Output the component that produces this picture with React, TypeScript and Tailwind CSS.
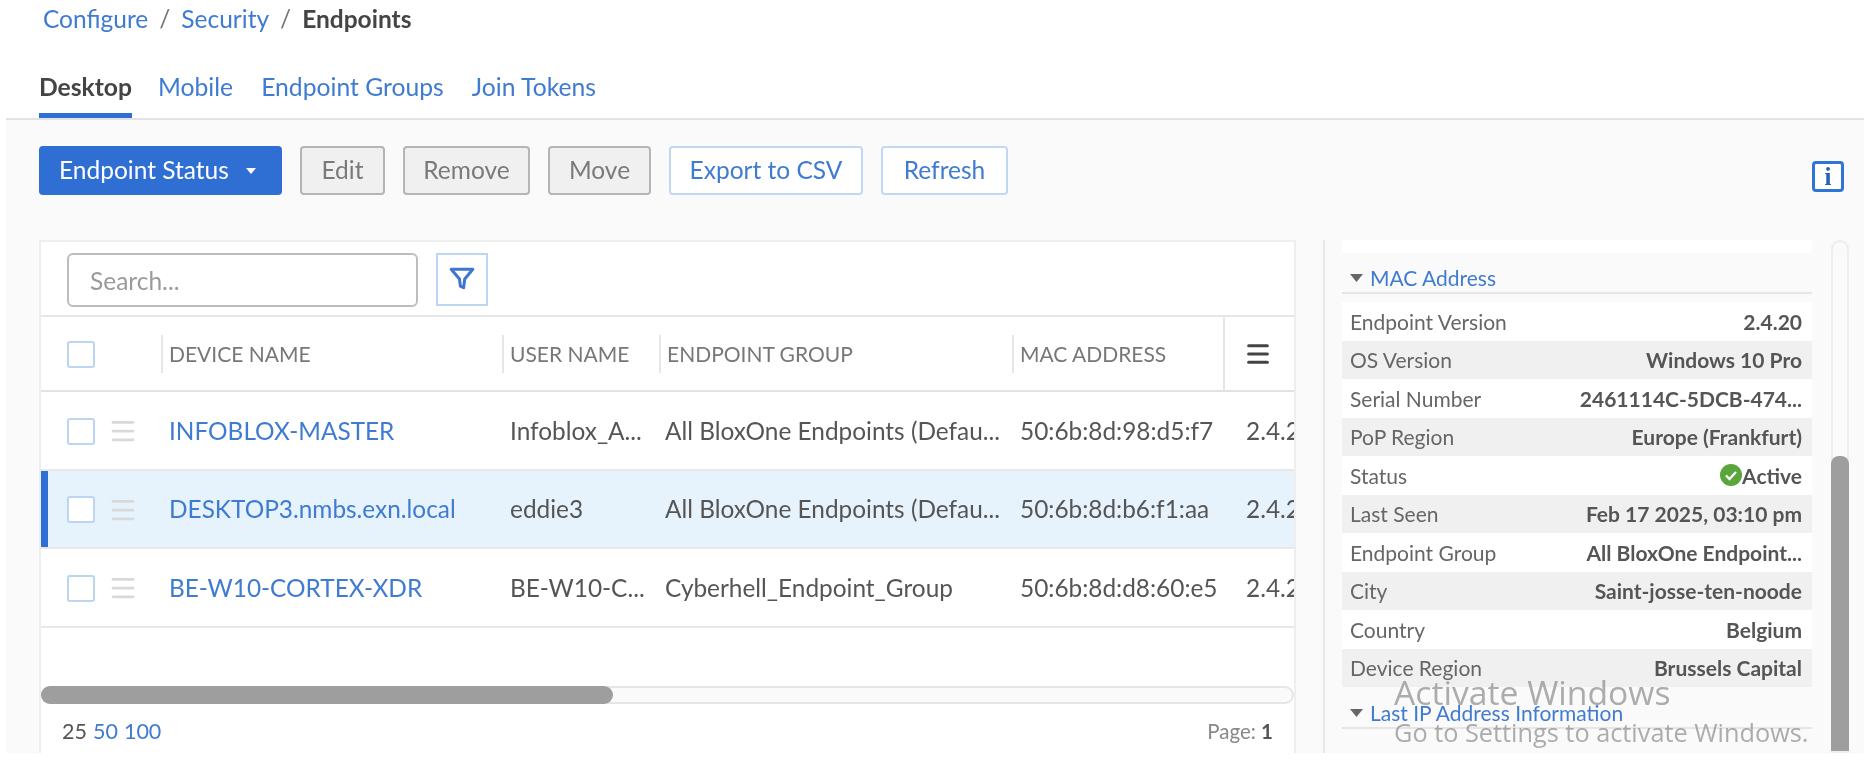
import { Menu } from 'lucide-react';

const tabs = ['Mobile', 'Endpoint Groups', 'Join Tokens'];

const rows = [
  { name: 'INFOBLOX-MASTER', user: 'Infoblox_A...', group: 'All BloxOne Endpoints (Defau...', mac: '50:6b:8d:98:d5:f7', selected: false },
  { name: 'DESKTOP3.nmbs.exn.local', user: 'eddie3', group: 'All BloxOne Endpoints (Defau...', mac: '50:6b:8d:b6:f1:aa', selected: true },
  { name: 'BE-W10-CORTEX-XDR', user: 'BE-W10-C...', group: 'Cyberhell_Endpoint_Group', mac: '50:6b:8d:d8:60:e5', selected: false },
];

const details = [
  ['Endpoint Version', '2.4.20'],
  ['OS Version', 'Windows 10 Pro'],
  ['Serial Number', '2461114C-5DCB-474...'],
  ['PoP Region', 'Europe (Frankfurt)'],
  ['Status', 'Active'],
  ['Last Seen', 'Feb 17 2025, 03:10 pm'],
  ['Endpoint Group', 'All BloxOne Endpoint...'],
  ['City', 'Saint-josse-ten-noode'],
  ['Country', 'Belgium'],
  ['Device Region', 'Brussels Capital'],
];

function Caret({ className }: { className: string }) {
  return (
    <svg viewBox="0 0 10 6" className={className} fill="currentColor">
      <path d="M0 0h10L5 6z" />
    </svg>
  );
}

function Checkbox() {
  return <div className="h-[27px] w-[28px] shrink-0 rounded-[3px] border-2 border-[#bcd5f2] bg-white" />;
}

function DisabledButton({ label, width }: { label: string; width: string }) {
  return (
    <button className={`h-[49px] ${width} rounded-[4px] border-2 border-[#b5b5b5] bg-[#f0f0f0] text-[24.5px] text-[#7a7a7a]`}>
      {label}
    </button>
  );
}

function OutlineButton({ label, width }: { label: string; width: string }) {
  return (
    <button className={`h-[49px] ${width} rounded-[4px] border-2 border-[#c0d8f3] bg-white text-[24.5px] text-[#3f7bd0]`}>
      {label}
    </button>
  );
}

function SectionTitle({ label }: { label: string }) {
  return (
    <div className="flex h-[41px] items-center gap-[7px] border-b-2 border-[#e6e6e6] pl-[8px] pt-[10px] text-[21px] text-[#3f7bd0]">
      <Caret className="h-[8px] w-[13px] text-[#666666]" />
      {label}
    </div>
  );
}

export default function App() {
  return (
    <div className="flex h-[762px] w-[1864px] flex-col overflow-hidden bg-white pb-[9px] pl-[6px] font-['Lato',sans-serif] blur-[0.6px]">
      <div className="flex h-[38px] items-center gap-[11px] pl-[37px] text-[24.5px] text-[#3f7bd0]">
        <span>Configure</span>
        <span className="text-[#777777]">/</span>
        <span>Security</span>
        <span className="text-[#777777]">/</span>
        <span className="font-bold text-[#444444]">Endpoints</span>
      </div>

      <div className="flex h-[82px] items-end gap-[28px] border-b-2 border-[#e2e2e2] pl-[33px] text-[24.7px] text-[#3f7bd0]">
        <div className="-mr-[2px] flex h-[62px] w-[93px] items-center justify-center whitespace-nowrap border-b-[5px] border-[#2f6fd4] pt-[4px] font-bold text-[#444444]">
          Desktop
        </div>
        {tabs.map((tab) => (
          <div key={tab} className="flex h-[62px] items-center pb-[1px]">
            {tab}
          </div>
        ))}
      </div>

      <div className="flex min-h-0 flex-1 flex-col bg-[#fafafa] pl-[33px]">
        <div className="flex h-[120px] shrink-0 items-start pr-[20px] pt-[26px]">
          <div className="flex gap-[18px]">
            <button className="flex h-[49px] w-[243px] items-center gap-[16px] rounded-[4px] bg-[#2f6fd4] pl-[20px] text-[24.5px] text-white">
              Endpoint Status
              <Caret className="h-[6px] w-[12px] text-white" />
            </button>
            <DisabledButton label="Edit" width="w-[85px]" />
            <DisabledButton label="Remove" width="w-[127px]" />
            <DisabledButton label="Move" width="w-[103px]" />
            <OutlineButton label="Export to CSV" width="w-[194px]" />
            <OutlineButton label="Refresh" width="w-[127px]" />
          </div>
          <div className="ml-auto mt-[15px] flex h-[31px] w-[32px] items-center justify-center rounded-[4px] border-[3px] border-[#2f74d8] bg-white font-['Liberation_Serif',serif] text-[25px] font-bold leading-none text-[#2a62b8]">
            i
          </div>
        </div>

        <div className="flex min-h-0 flex-1">
          <div className="flex w-[1257px] shrink-0 flex-col overflow-hidden border-x-2 border-t-2 border-[#eeeeee] bg-white">
            <div className="flex h-[75px] shrink-0 items-start gap-[18px] border-b-2 border-[#e6e6e6] pl-[26px] pt-[11px]">
              <div className="flex h-[54px] w-[351px] items-center rounded-[6px] border-2 border-[#bdbdbd] pl-[21px] pt-[2px] text-[24.5px] text-[#9a9a9a]">
                Search...
              </div>
              <div className="flex h-[53px] w-[52px] items-center justify-center border-2 border-[#bcd5f2] pb-[4px]">
                <svg viewBox="0 0 24 24" className="h-[26px] w-[26px]" fill="none" stroke="#3f76d2" strokeWidth="2.8" strokeLinejoin="round">
                  <path d="M2 4h20l-7.5 9-1 8-3-1.5-.8-6.5z" />
                </svg>
              </div>
            </div>

            <div className="flex h-[75px] shrink-0 items-center border-b-2 border-[#e2e2e2] text-[21px] text-[#777777]">
              <div className="flex w-[120px] shrink-0 pl-[26px] pt-[2px]">
                <Checkbox />
              </div>
              <div className="h-[38px] w-[341px] shrink-0 border-l-2 border-[#e6e6e6] pl-[6px] leading-[38px]">DEVICE NAME</div>
              <div className="h-[38px] w-[157px] shrink-0 border-l-2 border-[#e6e6e6] pl-[6px] leading-[38px]">USER NAME</div>
              <div className="h-[38px] w-[353px] shrink-0 border-l-2 border-[#e6e6e6] pl-[6px] leading-[38px]">ENDPOINT GROUP</div>
              <div className="h-[38px] w-[211px] shrink-0 border-l-2 border-[#e6e6e6] pl-[6px] leading-[38px]">MAC ADDRESS</div>
              <div className="flex h-full flex-1 items-center justify-center border-l-2 border-[#e6e6e6] pr-[3px]">
                <Menu className="h-[28px] w-[28px] text-[#444444]" strokeWidth={2.6} />
              </div>
            </div>

            {rows.map((row) => (
              <div
                key={row.name}
                className={`flex h-[78.5px] shrink-0 items-center border-b-2 border-[#e8e8e8] pt-[2px] text-[24.4px] text-[#555555] ${row.selected ? 'bg-[#e6f2fc]' : 'bg-white'}`}
              >
                <div className={`-mt-[2px] flex w-[120px] shrink-0 items-center gap-[13px] self-stretch pt-[2px] ${row.selected ? 'border-l-[7px] border-[#2f6fd4] pl-[19px]' : 'pl-[26px]'}`}>
                  <Checkbox />
                  <Menu className="h-[30px] w-[30px] text-[#d9d9d9]" strokeWidth={2.2} />
                </div>
                <div className="w-[341px] shrink-0 whitespace-nowrap pl-[8px] text-[#3f7bd0]">{row.name}</div>
                <div className="w-[157px] shrink-0 whitespace-nowrap pl-[8px]">{row.user}</div>
                <div className="w-[353px] shrink-0 whitespace-nowrap pl-[6px]">{row.group}</div>
                <div className="w-[211px] shrink-0 whitespace-nowrap pl-[8px]">{row.mac}</div>
                <div className="flex-1 overflow-hidden whitespace-nowrap pl-[23px]">2.4.20</div>
              </div>
            ))}

            <div className="flex-1" />

            <div className="h-[18px] shrink-0 rounded-full border-2 border-[#e6e6e6] bg-[#fafafa]">
              <div className="-m-[2px] h-[18px] w-[572px] rounded-full bg-[#9e9e9e]" />
            </div>

            <div className="flex h-[49px] shrink-0 items-center justify-between pl-[21px] pr-[21px] pt-[6px] text-[20.5px]">
              <div className="flex gap-[6px] text-[21.5px] text-[#3f7bd0]">
                <span className="text-[#555555]">25</span>
                <span>50</span>
                <span>100</span>
              </div>
              <div className="text-[#888888]">
                Page: <span className="font-bold text-[#555555]">1</span>
              </div>
            </div>
          </div>

          <div className="ml-[27px] flex flex-1 border-l-2 border-[#e6e6e6] pl-[17px]">
            <div className="flex w-[470px] shrink-0 flex-col">
              <div className="h-[13px] bg-white" />
              <SectionTitle label="MAC Address" />
              <div className="mt-[8px] flex flex-col text-[21px] text-[#666666]">
                {details.map(([label, value], i) => (
                  <div key={label} className={`flex h-[38.5px] items-center justify-between pl-[8px] pr-[10px] ${i % 2 === 1 ? 'bg-[#f0f0f0]' : 'bg-white'}`}>
                    <span>{label}</span>
                    <span className="flex items-center font-bold text-[#555555]">
                      {label === 'Status' && (
                        <svg viewBox="0 0 22 22" className="h-[22px] w-[22px]">
                          <circle cx="11" cy="11" r="11" fill="#5aa63c" />
                          <path d="M6 11.5l3.5 3.5L16 8" fill="none" stroke="#ffffff" strokeWidth="2.4" />
                        </svg>
                      )}
                      {value}
                    </span>
                  </div>
                ))}
              </div>
              <div className="mt-[1px]">
                <SectionTitle label="Last IP Address Information" />
              </div>
            </div>
            <div className="ml-[19px] flex w-[18px] shrink-0 flex-col rounded-t-full border-2 border-[#eeeeee]">
              <div className="-mx-[2px] mt-[214px] flex-1 rounded-t-[8px] bg-[#9e9e9e]" />
            </div>
          </div>
        </div>
      </div>

      <div className="pointer-events-none absolute left-[1394px] top-[670px] whitespace-nowrap font-['Open_Sans',sans-serif] text-[#8a8a8a]/70">
        <div className="text-[33.7px] leading-[44px]">Activate Windows</div>
        <div className="text-[25.3px] leading-[36px]">Go to Settings to activate Windows.</div>
      </div>
    </div>
  );
}
